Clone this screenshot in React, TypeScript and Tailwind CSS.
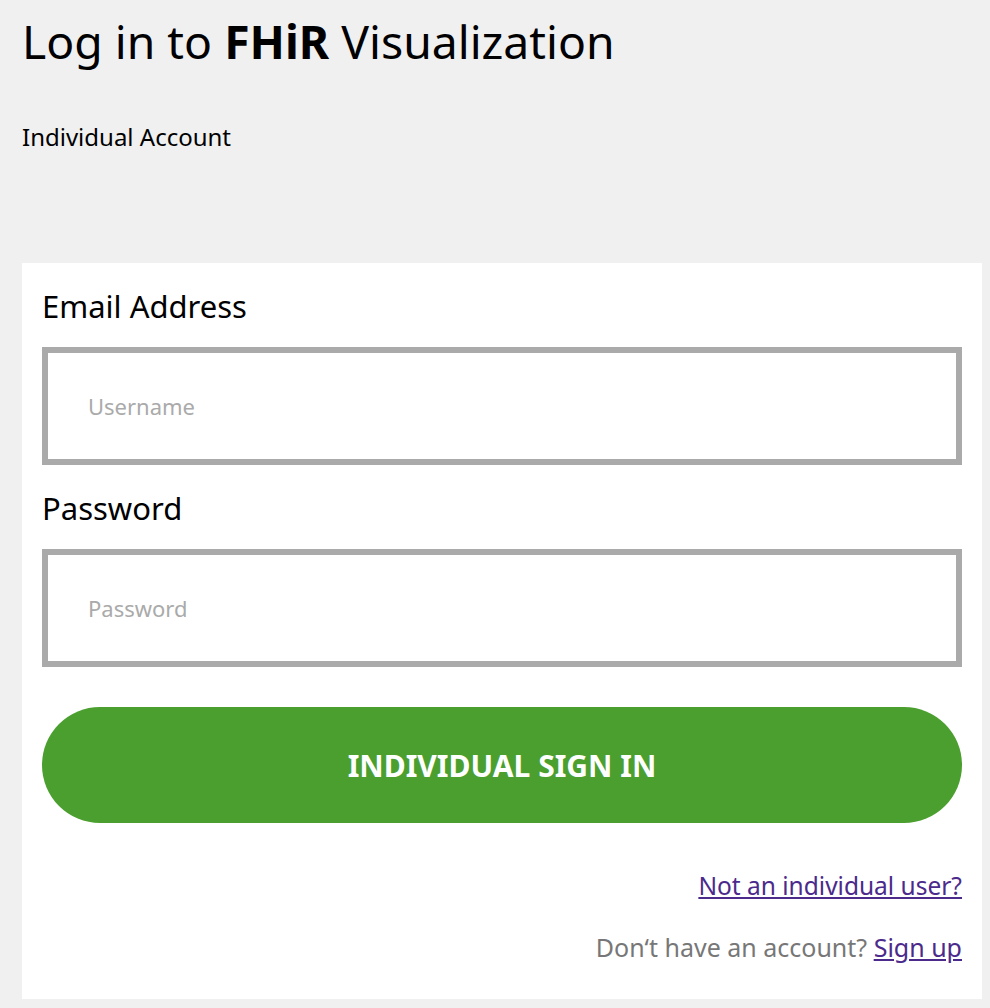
import React from "react";

export default function App() {
  return (
    <div
      className="min-h-[1008px] w-[990px] bg-[#f0f0f0] pt-[14px] pb-[10px] pl-[22px] pr-[8px]"
      style={{ fontFamily: '"Noto Sans", "Open Sans", sans-serif' }}
    >
      <h1 className="text-[46.3px] leading-[56px] text-black">
        Log in to <span className="font-bold">FHiR</span> Visualization
      </h1>
      <p className="mt-[52px] text-[24px] leading-[30px] text-black">Individual Account</p>
      <div className="mt-[111px] bg-white px-[20px] pt-[22px] pb-[35px]">
        <label className="block text-[31px] leading-[42px] text-black">Email Address</label>
        <div className="mt-[20px] h-[118px] border-[6px] border-[#aaaaaa] bg-white flex items-center pl-[40px]">
          <input
            className="w-full outline-none text-[22px] text-black placeholder:text-[#aaaaaa] bg-transparent"
            placeholder="Username"
          />
        </div>
        <label className="mt-[22px] block text-[31px] leading-[42px] text-black">Password</label>
        <div className="mt-[20px] h-[118px] border-[6px] border-[#aaaaaa] bg-white flex items-center pl-[40px]">
          <input
            type="password"
            className="w-full outline-none text-[22px] text-black placeholder:text-[#aaaaaa] bg-transparent"
            placeholder="Password"
          />
        </div>
        <button className="mt-[40px] h-[116px] w-full rounded-full bg-[#4a9f2f] text-white font-bold text-[30px]">
          INDIVIDUAL SIGN IN
        </button>
        <div className="mt-[46px] flex flex-col items-end gap-[27px]">
          <a href="#" className="text-[24.5px] leading-[34px] text-[#4b2a8c] underline">
            Not an individual user?
          </a>
          <p className="text-[25px] leading-[34px] text-[#777777]">
            Don‘t have an account?{" "}
            <a href="#" className="text-[#4b2a8c] underline">
              Sign up
            </a>
          </p>
        </div>
      </div>
    </div>
  );
}
